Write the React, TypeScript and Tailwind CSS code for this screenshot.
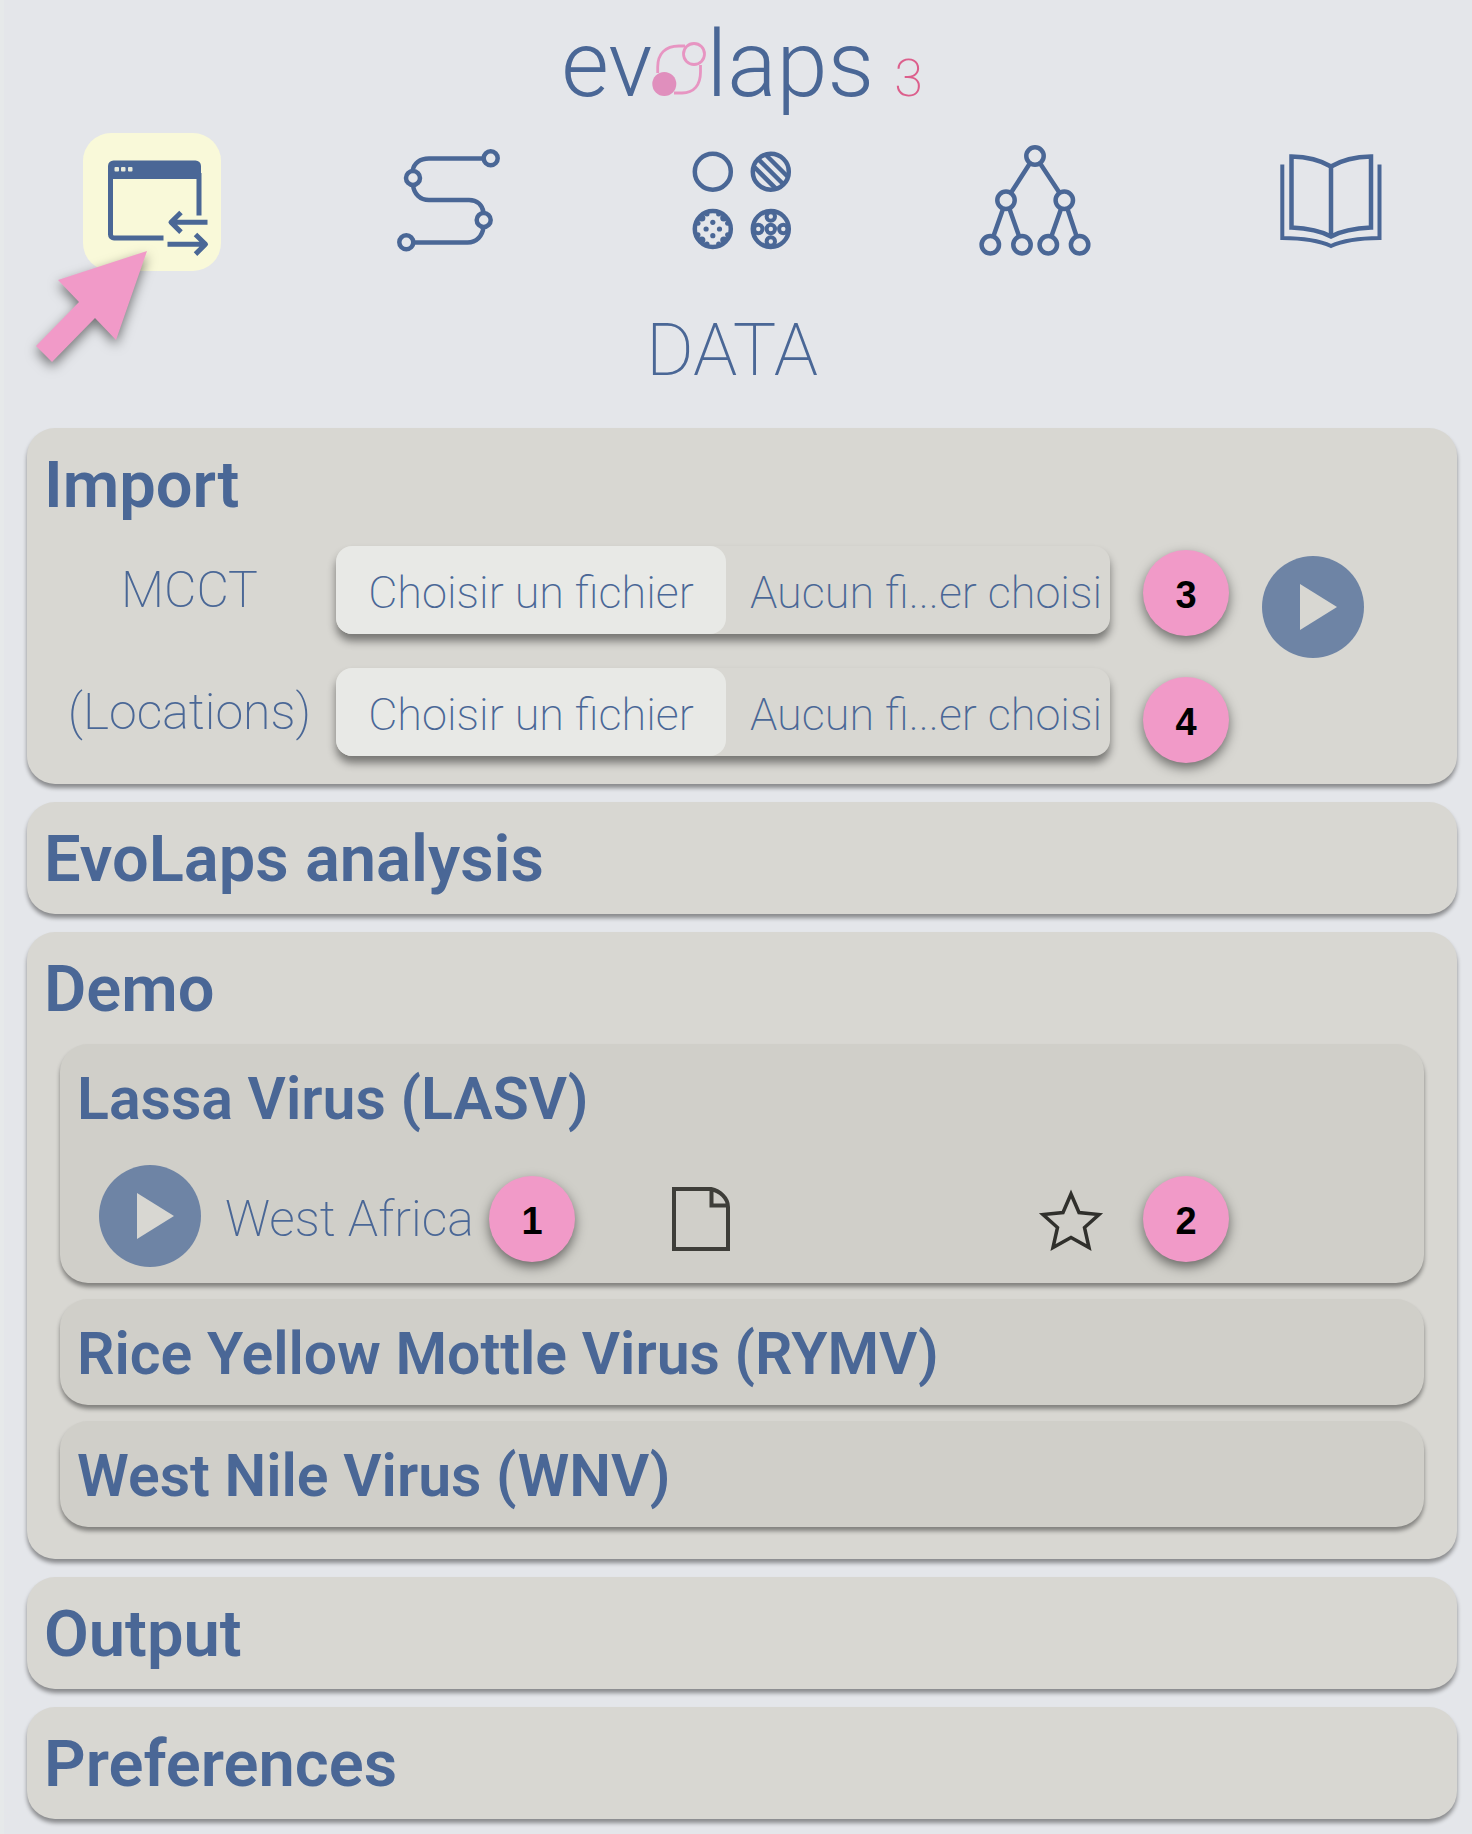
import { useState } from "react";
import type { ReactNode } from "react";
import clsx from "clsx";

const INK = "#4a6796";

function WindowIcon() {
  return (
    <svg viewBox="0 0 138 138" className="size-full" fill="none" stroke={INK} strokeWidth="5">
      <path d="M80.5 105H31a3.500 3.500 0 0 1-3.500-3.500V40M116 82.500V40" />
      <path d="M25 46V33a5.500 5.500 0 0 1 5.500-5.500h82A5.500 5.500 0 0 1 118 33v13z" fill={INK} stroke="none" />
      <g fill="#e8ebdc" stroke="none">
        <rect x="31.500" y="34" width="4.500" height="4.500" rx="1" />
        <rect x="38" y="34" width="4.500" height="4.500" rx="1" />
        <rect x="45" y="34" width="4.500" height="4.500" rx="1" />
      </g>
      <path d="M124.500 89.300H88M98 79.500l-10 9.800 10 9.800" strokeLinejoin="round" />
      <path d="M84.500 111.300H122M112.500 101.500l10 9.800-10 9.800" strokeLinejoin="round" />
    </svg>
  );
}

function PathIcon() {
  return (
    <svg viewBox="0 0 138 138" className="size-full" fill="none" stroke={INK} strokeWidth="4.500">
      <path d="M105.500 25.500H51C42 25.500 36 30 34.500 38M35 52c1 9 7 15 16 15h40c8 0 13.500 5 14.700 13M105.500 94c-1 9-7 15.500-16 15.500H36" />
      <circle cx="112.700" cy="25.300" r="7" />
      <circle cx="35" cy="45" r="7" />
      <circle cx="105.700" cy="87" r="7" />
      <circle cx="28.300" cy="109.300" r="7" />
    </svg>
  );
}

function PatternIcon() {
  return (
    <svg viewBox="0 0 138 138" className="size-full" fill="none" stroke={INK} strokeWidth="4.500">
      <circle cx="39.800" cy="38.700" r="18" />
      <circle cx="97.800" cy="38.700" r="18" />
      <path d="M85 25.900l25.600 25.600M92.500 21.500l22.500 22.500M80.600 33.400l22.500 22.500" />
      <circle cx="39.800" cy="96" r="18" />
      <g fill={INK} stroke="none">
        <circle cx="39.800" cy="89.300" r="2.600" />
        <circle cx="39.800" cy="102.700" r="2.600" />
        <circle cx="33.100" cy="96" r="2.600" />
        <circle cx="46.500" cy="96" r="2.600" />
        <circle cx="28.800" cy="85" r="3.600" />
        <circle cx="50.800" cy="85" r="3.600" />
        <circle cx="28.800" cy="107" r="3.600" />
        <circle cx="50.800" cy="107" r="3.600" />
        <circle cx="34" cy="81" r="2.500" />
        <circle cx="45.600" cy="81" r="2.500" />
        <circle cx="34" cy="111" r="2.500" />
        <circle cx="45.600" cy="111" r="2.500" />
        <circle cx="25" cy="90.200" r="2.500" />
        <circle cx="25" cy="101.800" r="2.500" />
        <circle cx="54.600" cy="90.200" r="2.500" />
        <circle cx="54.600" cy="101.800" r="2.500" />
      </g>
      <circle cx="97.800" cy="96" r="18" />
      <g strokeWidth="4">
        <circle cx="97.800" cy="96" r="4.200" />
        <circle cx="97.800" cy="83.500" r="4.200" />
        <circle cx="97.800" cy="108.500" r="4.200" />
        <circle cx="85.300" cy="96" r="4.200" />
        <circle cx="110.300" cy="96" r="4.200" />
      </g>
    </svg>
  );
}

function TreeIcon() {
  return (
    <svg viewBox="0 0 138 138" className="size-full" fill="none" stroke={INK} strokeWidth="4.500">
      <circle cx="67" cy="23" r="8.700" />
      <circle cx="38" cy="67.300" r="8.700" />
      <circle cx="96.300" cy="67.300" r="8.700" />
      <circle cx="22.300" cy="111.700" r="8.700" />
      <circle cx="54" cy="111.700" r="8.700" />
      <circle cx="80.300" cy="111.700" r="8.700" />
      <circle cx="111.600" cy="111.700" r="8.700" />
      <path d="M61.500 31L43.500 59M72.500 31l18.500 28M35 76l-9.500 27M41.500 76l9.500 27M93 76l-9.500 27M99.500 76l9 27" />
    </svg>
  );
}

function BookIcon() {
  return (
    <svg viewBox="0 0 138 138" className="size-full" fill="none" stroke={INK} strokeWidth="4.500">
      <path d="M28.500 23.500C44 23.800 58 27.500 68 33.500C78 27.500 92 23.800 108 23.500V94.500C92 95.200 78 98 68 103.500C58 98 44 95.200 28.500 94.500z" />
      <path d="M68 32v71" />
      <path d="M19.300 31.500V105C40 105.200 56 107.500 68 113C80 107.500 96 105.200 116.500 105V31.500" strokeWidth="4" />
    </svg>
  );
}

function FileIcon() {
  return (
    <svg viewBox="0 0 60 68" className="h-[68px] w-[60px] shrink-0" fill="none" stroke="#3e3e39" strokeWidth="4">
      <path d="M3 4h37c9 2 17 9 17 18v42H3zM40.500 4v16.500H57" />
    </svg>
  );
}

function StarIcon() {
  return (
    <svg viewBox="0 0 64 64" className="size-16 overflow-visible" fill="none" stroke="#30302c" strokeWidth="3.500">
      <path d="M32 7l8 18.500L60 27.500 45.500 40.500l4.500 20L32 50.500l-18 10 4.500-20L4 27.500l20-2z" />
    </svg>
  );
}

function Logo() {
  return (
    <h1 className="flex items-baseline justify-center text-[92px] leading-24 font-light">
      <span>ev</span>
      <svg viewBox="0 0 54 54" className="size-[54px]" fill="none" stroke="#e795c2" strokeWidth="2.800">
        <circle cx="12.300" cy="42" r="12" fill="#e08fbd" stroke="none" />
        <circle cx="42" cy="12" r="10.500" />
        <path d="M5.700 31V25C5.700 12 13 4 27 4h6M48.500 23v7C48.500 43 42 51 30 51h-8" />
      </svg>
      <span>laps</span>
      <span className="ml-5 text-[52px] leading-none font-extralight text-[#dc5f8c]">3</span>
    </h1>
  );
}

function PointerArrow() {
  return (
    <svg viewBox="0 0 112 112" className="pointer-events-none absolute top-[118px] -left-12 size-28 overflow-visible drop-shadow-[0_5px_6px_rgba(0,0,0,0.5)]">
      <path d="M112 0L23 29l21 22L1 95l16 16 43-44 21 22z" fill="#f19ac8" />
    </svg>
  );
}

function Badge({ children }: { children: ReactNode }) {
  return (
    <span className="flex size-[86px] shrink-0 items-center justify-center rounded-full bg-[#f19ac8] pt-1 font-['Liberation_Sans',sans-serif] text-[38px] font-bold text-black shadow-[0_5px_12px_rgba(0,0,0,0.5)]">
      {children}
    </span>
  );
}

function PlayButton({ label }: { label: string }) {
  return (
    <button type="button" aria-label={label} className="size-[102px] shrink-0 cursor-pointer rounded-full bg-[#6e84a5]">
      <svg viewBox="0 0 102 102" className="size-full">
        <path d="M38 28l37 23-37 23z" fill="#d8d7d2" />
      </svg>
    </button>
  );
}

function FileField({ id, label }: { id: string; label: string }) {
  return (
    <div className="flex h-[88px] items-center">
      <span className="w-[309px] shrink-0 pl-4 text-center text-[50px] font-extralight">{label}</span>
      <label
        htmlFor={id}
        className="flex h-full flex-1 cursor-pointer items-center rounded-2xl bg-[#d8d7d2] text-[45px] font-extralight whitespace-nowrap shadow-[0_7px_8px_rgba(0,0,0,0.45)]"
      >
        <input id={id} type="file" aria-label={label} className="sr-only" />
        <span className="flex h-full w-[390px] items-center justify-center rounded-2xl bg-[#e8e9e6] pt-1.5">Choisir un fichier</span>
        <span className="pt-1.5 pl-6">Aucun fi...er choisi</span>
      </label>
    </div>
  );
}

function Panel({ title, children }: { title: string; children?: ReactNode }) {
  return (
    <section className="rounded-[28px] bg-[#d8d7d2] shadow-[0_4px_4px_rgba(0,0,0,0.4)]">
      <h2 className="flex h-28 items-center px-[17px] pt-1 text-[65px] font-semibold">{title}</h2>
      {children}
    </section>
  );
}

function VirusPanel({ title, children }: { title: string; children?: ReactNode }) {
  return (
    <section className="rounded-[28px] bg-[#d0cfc9] shadow-[0_4px_4px_rgba(0,0,0,0.4)]">
      <h3 className="flex h-[106px] items-center px-[17px] pt-1 text-[59px] font-semibold">{title}</h3>
      {children}
    </section>
  );
}

const tabs = [
  { name: "Data", icon: <WindowIcon /> },
  { name: "Path", icon: <PathIcon /> },
  { name: "Patterns", icon: <PatternIcon /> },
  { name: "Tree", icon: <TreeIcon /> },
  { name: "Documentation", icon: <BookIcon /> },
];

export default function App() {
  const [active, setActive] = useState("Data");

  return (
    <main className="min-h-screen border-l-4 border-[#e6e9ea] bg-[#e4e6ea] pt-[17px] pr-[15px] pb-4 pl-[23px] font-[Roboto,sans-serif] text-[#4a6796]">
      <Logo />

      <nav className="mt-5 flex justify-between px-14">
        {tabs.map((tab) => (
          <div key={tab.name} className="relative size-[138px]">
            <button
              type="button"
              aria-label={tab.name}
              onClick={() => setActive(tab.name)}
              className={clsx("size-full cursor-pointer rounded-[28px]", active === tab.name && "bg-[#f9f9d9]")}
            >
              {tab.icon}
            </button>
            {tab.name === "Data" && <PointerArrow />}
          </div>
        ))}
      </nav>

      <p className="mt-[35px] pr-5 text-center text-[73px] leading-[88px] font-extralight uppercase">{active}</p>

      <div className="mt-[34px] flex flex-col gap-[18px]">
        <Panel title="Import">
          <div className="flex gap-[33px] pt-1.5 pr-[93px] pb-[21px]">
            <div className="flex flex-1 flex-col gap-[34px]">
              <FileField id="mcct" label="MCCT" />
              <FileField id="locations" label="(Locations)" />
            </div>
            <div className="flex flex-col gap-[41px] pt-1">
              <Badge>3</Badge>
              <Badge>4</Badge>
            </div>
            <div className="pt-2.5">
              <PlayButton label="Import" />
            </div>
          </div>
        </Panel>

        <Panel title="EvoLaps analysis" />

        <Panel title="Demo">
          <div className="flex flex-col gap-4 px-[33px] pb-8">
            <VirusPanel title="Lassa Virus (LASV)">
              <div className="flex items-center pt-[15px] pr-[195px] pb-4 pl-[39px]">
                <PlayButton label="West Africa" />
                <div className="flex flex-1 items-center pt-1.5">
                  <span className="w-[288px] pl-6 text-[50px] font-extralight whitespace-nowrap">West Africa</span>
                  <Badge>1</Badge>
                  <button type="button" aria-label="Open file" className="ml-24 cursor-pointer">
                    <FileIcon />
                  </button>
                  <button type="button" aria-label="Favourite" className="mr-10 ml-auto cursor-pointer">
                    <StarIcon />
                  </button>
                  <Badge>2</Badge>
                </div>
              </div>
            </VirusPanel>
            <VirusPanel title="Rice Yellow Mottle Virus (RYMV)" />
            <VirusPanel title="West Nile Virus (WNV)" />
          </div>
        </Panel>

        <Panel title="Output" />
        <Panel title="Preferences" />
      </div>
    </main>
  );
}
